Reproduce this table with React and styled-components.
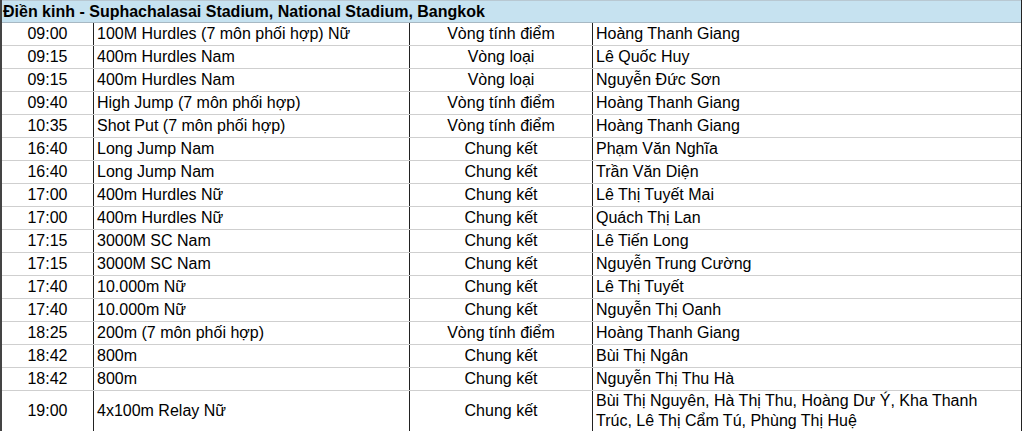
import React from "react";
import styled, { createGlobalStyle } from "styled-components";

const Global = createGlobalStyle`
  html, body { margin: 0; padding: 0; background: #fff; }
  body { font-family: "Liberation Sans", Arial, sans-serif; color: #000; }
`;

const Sheet = styled.div`
  width: 1022px;
  border-left: 2px solid #444;
  border-right: 1px solid #222;
  box-sizing: border-box;
`;

const Title = styled.div`
  height: 23px;
  box-sizing: border-box;
  background: #c6e2f0;
  border-top: 1px solid #b8c8d2;
  border-bottom: 1px solid #a7b8c3;
  font-weight: bold;
  font-size: 16px;
  line-height: 21px;
  padding-left: 1px;
  white-space: nowrap;
`;

const Row = styled.div`
  display: grid;
  grid-template-columns: 91px 316px 183px 1fr;
  border-bottom: 1px solid #cfcfcf;
  min-height: 23px;
  box-sizing: border-box;
`;

const Cell = styled.div`
  font-size: 16px;
  line-height: ${(p) => (p.$tall ? "20px" : "22px")};
  padding: ${(p) => (p.$tall ? "0 12px 0 3px" : "0 3px")};
  text-align: ${(p) => p.$align || "left"};
  border-left: ${(p) => (p.$first ? "none" : "1px solid #222")};
  display: flex;
  align-items: center;
  justify-content: ${(p) => (p.$align === "center" ? "center" : "flex-start")};
  white-space: ${(p) => (p.$wrap ? "normal" : "nowrap")};
`;

const rows = [
  ["09:00", "100M Hurdles (7 môn phối hợp) Nữ", "Vòng tính điểm", "Hoàng Thanh Giang"],
  ["09:15", "400m Hurdles Nam", "Vòng loại", "Lê Quốc Huy"],
  ["09:15", "400m Hurdles Nam", "Vòng loại", "Nguyễn Đức Sơn"],
  ["09:40", "High Jump (7 môn phối hợp)", "Vòng tính điểm", "Hoàng Thanh Giang"],
  ["10:35", "Shot Put (7 môn phối hợp)", "Vòng tính điểm", "Hoàng Thanh Giang"],
  ["16:40", "Long Jump Nam", "Chung kết", "Phạm Văn Nghĩa"],
  ["16:40", "Long Jump Nam", "Chung kết", "Trần Văn Diện"],
  ["17:00", "400m Hurdles Nữ", "Chung kết", "Lê Thị Tuyết Mai"],
  ["17:00", "400m Hurdles Nữ", "Chung kết", "Quách Thị Lan"],
  ["17:15", "3000M SC Nam", "Chung kết", "Lê Tiến Long"],
  ["17:15", "3000M SC Nam", "Chung kết", "Nguyễn Trung Cường"],
  ["17:40", "10.000m Nữ", "Chung kết", "Lê Thị Tuyết"],
  ["17:40", "10.000m Nữ", "Chung kết", "Nguyễn Thị Oanh"],
  ["18:25", "200m (7 môn phối hợp)", "Vòng tính điểm", "Hoàng Thanh Giang"],
  ["18:42", "800m", "Chung kết", "Bùi Thị Ngân"],
  ["18:42", "800m", "Chung kết", "Nguyễn Thị Thu Hà"],
  [
    "19:00",
    "4x100m Relay Nữ",
    "Chung kết",
    "Bùi Thị Nguyên, Hà Thị Thu, Hoàng Dư Ý, Kha Thanh Trúc, Lê Thị Cẩm Tú, Phùng Thị Huệ",
  ],
];

export default function App() {
  return (
    <>
      <Global />
      <Sheet>
        <Title>Điền kinh - Suphachalasai Stadium, National Stadium, Bangkok</Title>
        {rows.map((r, i) => {
          const tall = i === rows.length - 1;
          return (
            <Row key={i}>
              <Cell $first $align="center">{r[0]}</Cell>
              <Cell>{r[1]}</Cell>
              <Cell $align="center">{r[2]}</Cell>
              <Cell $wrap={tall} $tall={tall}>{r[3]}</Cell>
            </Row>
          );
        })}
      </Sheet>
    </>
  );
}
